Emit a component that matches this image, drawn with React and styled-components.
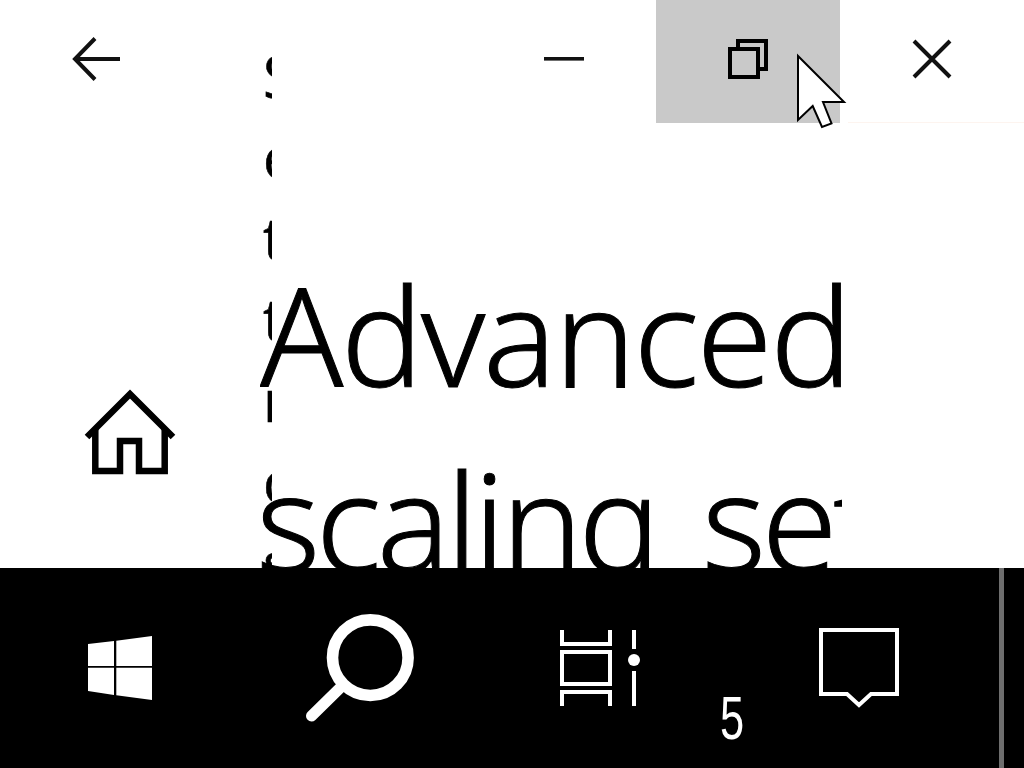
import React from "react";
import styled, { createGlobalStyle } from "styled-components";

const Global = createGlobalStyle`
  html, body { margin: 0; padding: 0; background: #fff; }
  #root { width: 1024px; height: 768px; }
`;

const Screen = styled.div`
  position: relative;
  width: 1024px;
  height: 768px;
  overflow: hidden;
  display: flex;
  flex-direction: column;
  font-family: "Open Sans", "Noto Sans", sans-serif;
  background: #fff;
`;

const Main = styled.main`
  height: 568px;
  display: grid;
  grid-template-columns: 260px 582px 1fr;
  color: #000;
`;

const Rail = styled.nav`
  display: flex;
  flex-direction: column;
  align-items: flex-start;
`;

const BackButton = styled.button`
  width: 192px;
  height: 120px;
  padding: 0;
  border: 0;
  background: none;
  display: block;
`;

const HomeButton = styled.button`
  width: 260px;
  height: 120px;
  margin-top: 252px;
  padding: 0;
  border: 0;
  background: none;
  display: block;
`;

const Content = styled.section`
  display: grid;
  overflow: hidden;
  height: 568px;
`;

const Paragraph = styled.div`
  grid-area: 1 / 1;
  width: 12px;
  overflow: hidden;
  padding-top: 35px;
  font-size: 58px;
  font-weight: 400;
  line-height: 81px;
  -webkit-text-stroke: 0.6px #000;
`;

const ParagraphLine = styled.div`
  padding-left: 3px;
  white-space: nowrap;
`;

const Title = styled.h1`
  grid-area: 1 / 1;
  margin: 0;
  padding-top: 241px;
  font-family: "Noto Sans", "Open Sans", sans-serif;
  font-size: 137px;
  font-weight: 300;
  line-height: 186px;
  white-space: nowrap;
  -webkit-text-stroke: 1px #000;
`;

const TitleLine = styled.span`
  display: block;
  margin-left: ${(p) => p.$indent}px;
  letter-spacing: ${(p) => p.$tracking}px;
  word-spacing: ${(p) => p.$words}px;
`;

const SideStrip = styled.div`
  height: 123px;
  margin-left: 6px;
  box-sizing: border-box;
  border-bottom: 1px solid #fdf4ef;
`;

const WindowControls = styled.div`
  position: absolute;
  top: 0;
  right: 0;
  display: flex;
`;

const ControlButton = styled.button`
  width: 184px;
  height: 123px;
  padding: 0 0 5px;
  border: 0;
  background: ${(p) => (p.$hover ? "#c9c9c9" : "transparent")};
  display: flex;
  align-items: center;
  justify-content: center;
`;

const Taskbar = styled.footer`
  height: 200px;
  background: #000;
  display: flex;
  color: #fff;
`;

const TaskButton = styled.button`
  position: relative;
  width: ${(p) => p.$w}px;
  height: 200px;
  padding: 0;
  border: 0;
  background: none;
  display: block;
  color: inherit;
`;

const Badge = styled.span`
  position: absolute;
  left: -3px;
  top: 114px;
  width: 20px;
  text-align: center;
  font-size: 62px;
  font-weight: 300;
  line-height: 72px;
  transform: scaleX(0.7);
  color: #fff;
`;

const Divider = styled.div`
  width: 5px;
  height: 200px;
  background: #6e6e6e;
`;

const Glyph = styled.svg`
  display: block;
`;

const Cursor = styled.svg`
  position: absolute;
  left: 790px;
  top: 48px;
`;

const Back = () => (
  <Glyph width="192" height="120" viewBox="0 0 192 120" fill="none" stroke="#111" strokeWidth="4">
    <path d="M120 59H76" />
    <path d="M95 38.5 L75 59 L95 79.5" />
  </Glyph>
);

const Home = () => (
  <Glyph width="260" height="120" viewBox="0 372 260 120" fill="none" stroke="#000" strokeWidth="6.5">
    <path d="M87 437 L130 394 L173 437" />
    <path d="M95.3 428 V471 H120 V441 H139 V471 H164.7 V428" />
  </Glyph>
);

const Minimize = () => (
  <Glyph width="40" height="4" viewBox="0 0 40 4">
    <rect width="40" height="3.6" fill="#111" />
  </Glyph>
);

const Restore = () => (
  <Glyph width="40" height="40" viewBox="0 0 40 40" fill="none" stroke="#000" strokeWidth="4">
    <path d="M10 8V2H38V30H32" />
    <rect x="2" y="10" width="28" height="28" />
  </Glyph>
);

const Close = () => (
  <Glyph width="40" height="40" viewBox="0 0 40 40" fill="none" stroke="#111" strokeWidth="4">
    <path d="M2 2L38 38M38 2L2 38" />
  </Glyph>
);

const Windows = () => (
  <Glyph width="240" height="200" viewBox="0 568 240 200" fill="#fff">
    <path d="M88 644 L114 641 V666 H88Z" />
    <path d="M116.3 640.7 L152 636 V666 H116.3Z" />
    <path d="M88 667.7 H114 V695 L88 691Z" />
    <path d="M116.3 667.7 H152 V700 L116.3 695.3Z" />
  </Glyph>
);

const Search = () => (
  <Glyph width="240" height="200" viewBox="240 568 240 200" fill="none" stroke="#fff" strokeWidth="11.6">
    <circle cx="370.3" cy="657.7" r="37.8" />
    <path d="M340 688 L311.5 716" strokeLinecap="round" strokeWidth="11" />
  </Glyph>
);

const TaskView = () => (
  <Glyph width="240" height="200" viewBox="480 568 240 200" fill="none" stroke="#fff" strokeWidth="4">
    <path d="M562 630V644H610V630" />
    <rect x="562" y="652" width="48" height="32" />
    <path d="M562 706V692H610V706" />
    <path d="M634 630V649M634 671V706" />
    <circle cx="634" cy="660" r="6" fill="#fff" stroke="none" />
  </Glyph>
);

const Message = () => (
  <Glyph width="279" height="200" viewBox="720 568 279 200" fill="none" stroke="#fff" strokeWidth="4">
    <path d="M821 630H897V694H871L859 705L847 694H821Z" />
  </Glyph>
);

const lines = ["S", "e", "t", "t", "r", "c", "s"];

export default function App() {
  return (
    <Screen>
      <Global />
      <Main>
        <Rail>
          <BackButton aria-label="Back"><Back /></BackButton>
          <HomeButton aria-label="Home"><Home /></HomeButton>
        </Rail>
        <Content>
          <Paragraph>
            {lines.map((l, i) => (
              <ParagraphLine key={i}>{l}</ParagraphLine>
            ))}
          </Paragraph>
          <Title>
            <TitleLine $indent={0} $tracking={-2.2} $words={0}>Advanced</TitleLine>
            <TitleLine $indent={-4} $tracking={-4.3} $words={14}>scaling settings</TitleLine>
          </Title>
        </Content>
        <SideStrip />
      </Main>
      <WindowControls>
        <ControlButton aria-label="Minimize"><Minimize /></ControlButton>
        <ControlButton $hover aria-label="Restore"><Restore /></ControlButton>
        <ControlButton aria-label="Close"><Close /></ControlButton>
      </WindowControls>
      <Taskbar>
        <TaskButton $w={240} aria-label="Start"><Windows /></TaskButton>
        <TaskButton $w={240} aria-label="Search"><Search /></TaskButton>
        <TaskButton $w={240} aria-label="Task view"><TaskView /></TaskButton>
        <TaskButton $w={279} aria-label="Notifications">
          <Message />
          <Badge>5</Badge>
        </TaskButton>
        <Divider />
      </Taskbar>
      <Cursor width="60" height="84" viewBox="790 48 60 84">
        <path d="M798 56 V120 L812.7 106 L822 127 L831.5 123.5 L823 102 H844Z" fill="#fff" stroke="#000" strokeWidth="2" />
      </Cursor>
    </Screen>
  );
}
